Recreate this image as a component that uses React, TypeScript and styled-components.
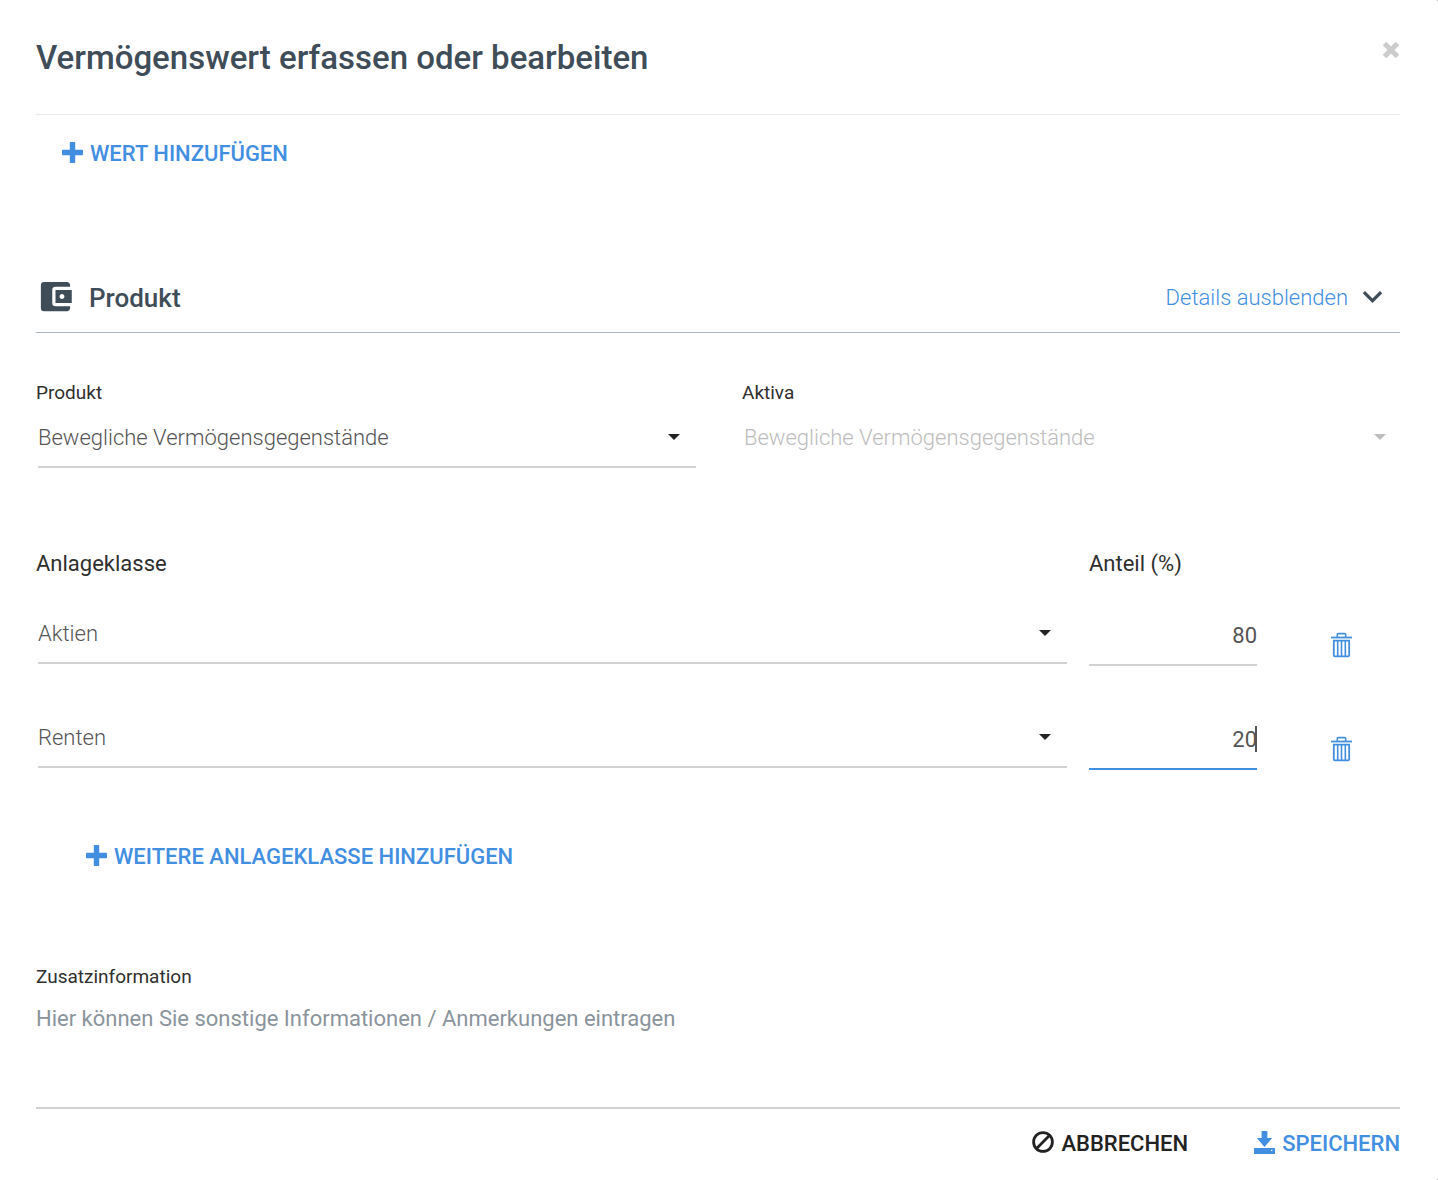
import React, { useState } from "react";
import styled, { createGlobalStyle, css } from "styled-components";
import { MdAccountBalanceWallet, MdExpandMore } from "react-icons/md";

const color = {
  slate: "#3f4d59",
  blue: "#428fe2",
  ink: "#2f2f2f",
  text: "#555555",
  muted: "#bdbdbd",
  placeholder: "#8a949c",
  line: "#d2d2d2",
};

const GlobalStyle = createGlobalStyle`
  *, *::before, *::after { box-sizing: border-box; }
  body {
    margin: 0;
    background: #b5b5b5;
    color: ${color.ink};
    font-family: Roboto, "Liberation Sans", sans-serif;
    font-size: 22px;
    line-height: 28px;
  }
  button, input, select, textarea {
    font: inherit;
    color: inherit;
    margin: 0;
    padding: 0;
    border: 0;
    border-radius: 0;
    background: transparent;
  }
`;

const underline = css<{ $active?: boolean }>`
  outline: none;
  border-bottom: 2px solid ${(p) => (p.$active ? color.blue : color.line)};
`;

const Dialog = styled.main`
  display: flex;
  flex-direction: column;
  min-height: 100vh;
  padding: 0 38px 16px 36px;
  background: #ffffff;
  border-radius: 0 2px 2px 0;
`;

const DialogHeader = styled.header`
  display: flex;
  justify-content: space-between;
  align-items: flex-start;
  padding: 38px 0 36px;
  border-bottom: 1px solid #e8e8e8;
`;

const Title = styled.h1`
  margin: 0;
  color: ${color.slate};
  font-size: 33px;
  font-weight: 500;
  line-height: 40px;
`;

const CloseButton = styled.button`
  display: flex;
  padding-top: 3px;
  color: #cccccc;
  cursor: pointer;
`;

const ActionButton = styled.button<{ $tone?: "dark" }>`
  display: inline-flex;
  align-items: center;
  gap: 7px;
  height: 40px;
  padding-top: 2px;
  color: ${(p) => (p.$tone === "dark" ? "#222222" : color.blue)};
  font-weight: 500;
  text-transform: uppercase;
  cursor: pointer;

  svg {
    margin-bottom: 4px;
  }
`;

const AddRow = styled.div<{ $indent: number }>`
  display: flex;
  padding-left: ${(p) => p.$indent}px;
`;

const TopActions = styled.div`
  padding: 18px 0 89px;
`;

const SectionHeader = styled.div`
  display: flex;
  align-items: center;
  justify-content: space-between;
  height: 71px;
  padding: 2px 8px 0 0;
  border-bottom: 1px solid #adb9c3;
  color: ${color.slate};

  svg {
    margin-bottom: 3px;
  }
`;

const SectionTitle = styled.h2`
  display: flex;
  align-items: center;
  gap: 14px;
  margin: 0;
  font-size: 26px;
  font-weight: 500;
`;

const DetailsButton = styled.button`
  display: flex;
  align-items: center;
  gap: 5px;
  color: ${color.blue};
  font-weight: 300;
  cursor: pointer;

  svg {
    color: ${color.slate};
  }
`;

const ProductGrid = styled.div`
  display: grid;
  grid-template-columns: 1fr 1fr;
  gap: 48px;
  padding: 48px 0 82px;
`;

const Field = styled.div`
  display: flex;
  flex-direction: column;
  gap: 3px;
`;

const Label = styled.label`
  font-size: 19px;
  line-height: 24px;
`;

const SelectBox = styled.div`
  display: grid;
  align-self: start;
  align-items: center;
  margin: 0 -2px 0 2px;

  > * {
    grid-area: 1 / 1;
  }

  > svg {
    justify-self: end;
    margin: 0 16px 2px 0;
    color: #222222;
    pointer-events: none;
  }

  > select:disabled + svg {
    color: ${color.muted};
  }
`;

const FieldSelectBox = styled(SelectBox)`
  align-self: stretch;
`;

const NativeSelect = styled.select`
  ${underline}
  width: 100%;
  height: 60px;
  padding-top: 2px;
  appearance: none;
  color: ${color.text};
  font-weight: 300;

  &:disabled {
    border-color: transparent;
    color: ${color.muted};
    opacity: 1;
  }
`;

const AssetGrid = styled.div`
  display: grid;
  grid-template-columns: 1fr 168px 119px;
  column-gap: 24px;
`;

const AssetHead = styled(AssetGrid)`
  padding-bottom: 26px;
`;

const AssetRows = styled.div`
  display: flex;
  flex-direction: column;
  gap: 42px;
  padding-bottom: 66px;
`;

const ShareBox = styled.div<{ $active?: boolean }>`
  position: relative;
  padding-top: 2px;

  &::after {
    content: "";
    display: ${(p) => (p.$active ? "block" : "none")};
    position: absolute;
    right: 0;
    top: 18px;
    width: 2px;
    height: 26px;
    background: ${color.text};
  }
`;

const ShareInput = styled.input<{ $active?: boolean }>`
  ${underline}
  width: 100%;
  height: 60px;
  color: ${color.text};
  text-align: right;
  caret-color: transparent;
`;

const DeleteButton = styled.button`
  display: flex;
  justify-content: center;
  align-items: flex-end;
  padding: 0 0 8px 2px;
  color: ${color.blue};
  cursor: pointer;
`;

const NotesField = styled(Field)`
  padding-top: 89px;
`;

const Notes = styled.textarea`
  ${underline}
  width: 100%;
  height: 117px;
  padding-top: 13px;
  resize: none;

  &::placeholder {
    color: ${color.placeholder};
    opacity: 1;
  }
`;

const DialogFooter = styled.footer`
  display: flex;
  justify-content: flex-end;
  gap: 66px;
  padding-top: 14px;
`;

const PlusIcon = () => (
  <svg width="21" height="21" viewBox="0 0 21 21" fill="currentColor" aria-hidden="true">
    <path d="M8.500 0h4q.7 0 .7.700v7.100h7.100q.7 0 .7.700v4q0 .7-.7.700h-7.100v7.100q0 .7-.7.700h-4q-.7 0-.7-.7v-7.100H.7q-.7 0-.7-.7v-4q0-.7.7-.7h7.100V.7q0-.7.7-.7z" />
  </svg>
);

const CloseIcon = () => (
  <svg width="18" height="18" viewBox="0 0 18 18" fill="none" stroke="currentColor" strokeWidth="5" aria-hidden="true">
    <path d="M2.500 2.500l13 13M15.500 2.500l-13 13" />
  </svg>
);

const CaretIcon = () => (
  <svg width="12" height="6" viewBox="0 0 12 6" fill="currentColor" aria-hidden="true">
    <path d="M0 0h12L6 6z" />
  </svg>
);

const TrashIcon = () => (
  <svg width="21" height="26" viewBox="0 0 21 26" fill="none" stroke="currentColor" aria-hidden="true">
    <path d="M0 5.500h21" strokeWidth="1.800" />
    <path d="M6.300 5V2.600q0-1 1-1h6.400q1 0 1 1V5" strokeWidth="1.600" />
    <path d="M2.800 8.600h15.400v14.600q0 1.200-1.200 1.200H4q-1.200 0-1.200-1.200z" strokeWidth="1.800" />
    <path d="M6.700 9v15M10.500 9v15M14.300 9v15" strokeWidth="1.600" />
  </svg>
);

const CancelIcon = () => (
  <svg width="22" height="22" viewBox="0 0 22 22" fill="none" stroke="currentColor" strokeWidth="2.800" aria-hidden="true">
    <circle cx="11" cy="11" r="9.400" />
    <path d="M4.600 17.400L17.400 4.600" />
  </svg>
);

const SaveIcon = () => (
  <svg width="21" height="23" viewBox="0 0 21 23" fill="currentColor" aria-hidden="true">
    <path d="M8.200 0h4.600q.6 0 .6.600V7h4.800l-7.700 9L2.800 7h4.800V.6q0-.6.6-.6z" />
    <path fillRule="evenodd" d="M.6 17h19.800q.6 0 .6.600v4.800q0 .6-.6.600H.6q-.6 0-.6-.6v-4.800q0-.6.6-.6zM17 18.700v1.300h1.300v-1.300z" />
  </svg>
);

const classes = ["Aktien", "Renten"];

type AssetRowProps = { name: string; share: string; active?: boolean };

function AssetRow({ name, share, active }: AssetRowProps) {
  const [value, setValue] = useState(share);
  return (
    <AssetGrid>
      <SelectBox>
        <NativeSelect aria-labelledby="asset-class" defaultValue={name}>
          {classes.map((c) => (
            <option key={c}>{c}</option>
          ))}
        </NativeSelect>
        <CaretIcon />
      </SelectBox>
      <ShareBox $active={active}>
        <ShareInput
          $active={active}
          aria-labelledby="asset-share"
          inputMode="numeric"
          value={value}
          onChange={(e) => setValue(e.target.value)}
        />
      </ShareBox>
      <DeleteButton type="button" aria-label={`${name} löschen`}>
        <TrashIcon />
      </DeleteButton>
    </AssetGrid>
  );
}

export default function App() {
  return (
    <>
      <GlobalStyle />
      <Dialog>
        <DialogHeader>
          <Title>Vermögenswert erfassen oder bearbeiten</Title>
          <CloseButton type="button" aria-label="Schließen">
            <CloseIcon />
          </CloseButton>
        </DialogHeader>

        <TopActions>
          <AddRow $indent={26}>
            <ActionButton type="button">
              <PlusIcon />
              Wert hinzufügen
            </ActionButton>
          </AddRow>
        </TopActions>

        <SectionHeader>
          <SectionTitle>
            <MdAccountBalanceWallet size={39} aria-hidden="true" />
            Produkt
          </SectionTitle>
          <DetailsButton type="button">
            Details ausblenden
            <MdExpandMore size={39} aria-hidden="true" />
          </DetailsButton>
        </SectionHeader>

        <ProductGrid>
          <Field>
            <Label htmlFor="product">Produkt</Label>
            <FieldSelectBox>
              <NativeSelect id="product">
                <option>Bewegliche Vermögensgegenstände</option>
              </NativeSelect>
              <CaretIcon />
            </FieldSelectBox>
          </Field>
          <Field>
            <Label htmlFor="assets">Aktiva</Label>
            <FieldSelectBox>
              <NativeSelect id="assets" disabled>
                <option>Bewegliche Vermögensgegenstände</option>
              </NativeSelect>
              <CaretIcon />
            </FieldSelectBox>
          </Field>
        </ProductGrid>

        <AssetHead>
          <span id="asset-class">Anlageklasse</span>
          <span id="asset-share">Anteil (%)</span>
        </AssetHead>
        <AssetRows>
          <AssetRow name="Aktien" share="80" />
          <AssetRow name="Renten" share="20" active />
        </AssetRows>

        <AddRow $indent={50}>
          <ActionButton type="button">
            <PlusIcon />
            Weitere Anlageklasse hinzufügen
          </ActionButton>
        </AddRow>

        <NotesField>
          <Label htmlFor="notes">Zusatzinformation</Label>
          <Notes id="notes" placeholder="Hier können Sie sonstige Informationen / Anmerkungen eintragen" />
        </NotesField>

        <DialogFooter>
          <ActionButton type="button" $tone="dark">
            <CancelIcon />
            Abbrechen
          </ActionButton>
          <ActionButton type="button">
            <SaveIcon />
            Speichern
          </ActionButton>
        </DialogFooter>
      </Dialog>
    </>
  );
}
